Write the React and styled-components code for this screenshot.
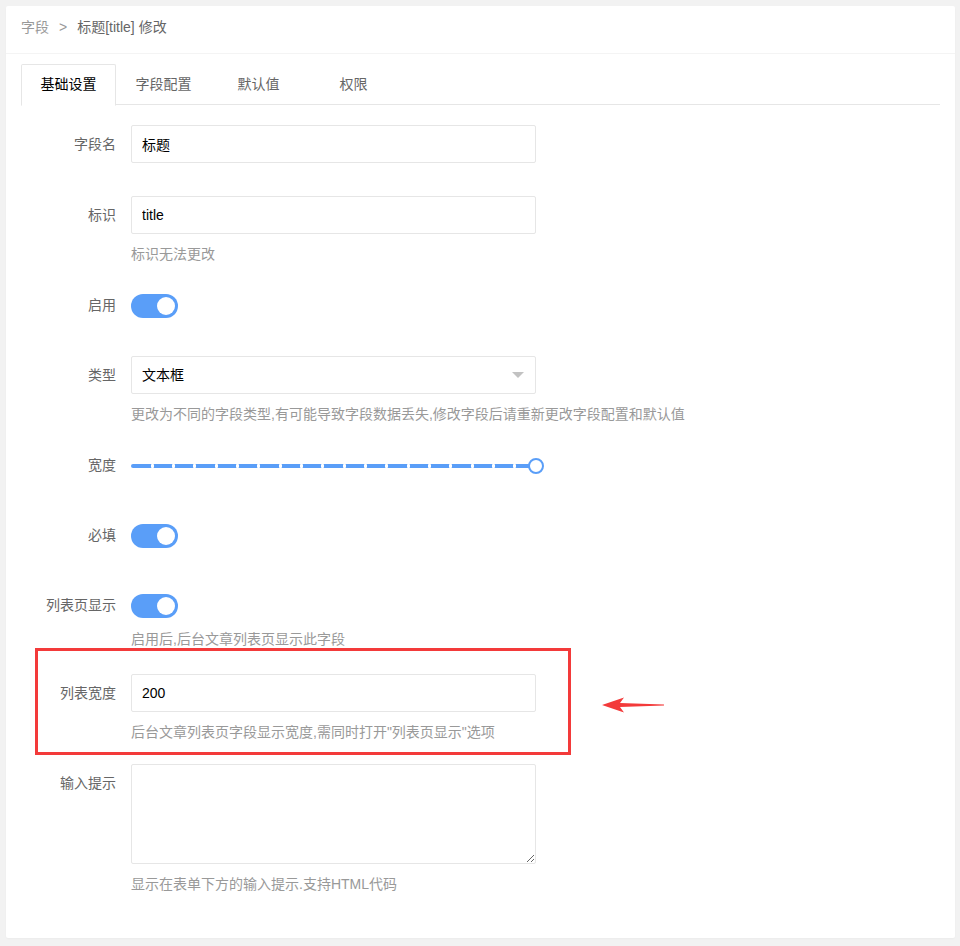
import React, { useState } from "react";
import styled, { createGlobalStyle, css } from "styled-components";

const GlobalStyle = createGlobalStyle`
  * { box-sizing: border-box; }
  html, body { margin: 0; padding: 0; }
  body {
    background: #f2f2f2;
    font-family: "Liberation Sans", "Noto Sans CJK SC", sans-serif;
    font-size: 14px;
    color: #333;
  }
`;

const BLUE = "#5a9ef8";
const RED = "#f33a3a";

// --- Layout ---
const Page = styled.div`
  padding: 6px 5px 8px 6px;
`;

const Card = styled.div`
  background: #fff;
  border-radius: 2px;
  box-shadow: 0 1px 2px rgba(0,0,0,0.03);
`;

const CardHeader = styled.div`
  padding: 11px 15px 16px;
  line-height: 20px;
  border-bottom: 1px solid #f4f4f4;
  font-size: 14px;
  span { color: #999; }
  em { font-style: normal; color: #999; margin: 0 10px; }
  b { font-weight: normal; color: #666; }
`;

const CardBody = styled.div`
  padding: 10px 15px 44px;
`;

// --- Tabs ---
const TabBar = styled.ul`
  display: flex;
  margin: 0;
  padding: 0;
  list-style: none;
  height: 41px;
  border-bottom: 1px solid #e6e6e6;
`;

const Tab = styled.li`
  min-width: 65px;
  padding: 0 15px;
  box-sizing: content-box;
  height: 40px;
  line-height: 40px;
  text-align: center;
  color: #666;
  cursor: pointer;
  ${({ $active }) => $active && css`
    color: #000;
    background: #fff;
    border: 1px solid #e6e6e6;
    border-bottom-color: #fff;
    border-radius: 2px 2px 0 0;
    height: 40px;
    line-height: 38px;
    padding: 0 14px;
    margin-bottom: -1px;
  `}
`;

const TabContent = styled.div`
  padding-top: 20px;
`;

// --- Form ---
const Item = styled.div`
  position: relative;
  display: flex;
  margin-bottom: ${({ $gap, $help }) => ($gap != null ? `${$gap}px` : $help ? "22px" : "32px")};
`;

const Label = styled.label`
  width: 110px;
  flex: none;
  padding: 9px 15px;
  line-height: 20px;
  text-align: right;
  color: #666;
`;

const Field = styled.div`
  width: 405px;
  min-height: 38px;
  display: flex;
  flex-direction: column;
  justify-content: flex-start;
`;

const Input = styled.input`
  width: 405px;
  height: 38px;
  border: 1px solid #e6e6e6;
  border-radius: 2px;
  padding: 0 10px;
  font: inherit;
  color: #000;
  outline: none;
`;

const TextArea = styled.textarea`
  display: block;
  width: 405px;
  height: 100px;
  border: 1px solid #e6e6e6;
  border-radius: 2px;
  padding: 6px 10px;
  font: inherit;
  color: #000;
  outline: none;
  resize: vertical;
`;

const Help = styled.div`
  margin-top: ${({ $tight }) => ($tight ? "5px" : "10px")};
  line-height: 20px;
  color: #999;
  white-space: nowrap;
`;

const SelectBox = styled.div`
  position: relative;
  height: 38px;
  border: 1px solid #e6e6e6;
  border-radius: 2px;
  padding: 0 10px;
  line-height: 36px;
  color: #000;
  &::after {
    content: "";
    position: absolute;
    right: 11px;
    top: 15px;
    border-style: solid;
    border-width: 6px 6px 0;
    border-color: #c2c2c2 transparent transparent;
  }
`;

const SwitchRow = styled.div`
  height: 38px;
  padding-top: 8px;
`;

const Switch = styled.button`
  position: relative;
  display: block;
  width: 47px;
  height: 24px;
  border: none;
  border-radius: 12px;
  padding: 0;
  background: ${({ $on }) => ($on ? BLUE : "#d2d2d2")};
  cursor: pointer;
  &::after {
    content: "";
    position: absolute;
    top: 3px;
    left: ${({ $on }) => ($on ? "26px" : "3px")};
    width: 18px;
    height: 18px;
    border-radius: 50%;
    background: #fff;
    transition: left 0.2s;
  }
`;

const SliderWrap = styled.div`
  height: 38px;
  padding-top: 18px;
`;

const Track = styled.div`
  position: relative;
  width: 100%;
  height: 4px;
  background: ${BLUE};
  border-radius: 2px;
`;

const Step = styled.span`
  position: absolute;
  top: 0;
  width: 3px;
  height: 4px;
  border-radius: 1px;
  background: #fff;
`;

const Handle = styled.span`
  position: absolute;
  right: -8px;
  top: 50%;
  width: 16px;
  height: 16px;
  margin-top: -8px;
  border: 2px solid ${BLUE};
  border-radius: 50%;
  background: #fff;
`;

// --- Annotation overlay ---
const Highlight = styled.div`
  position: absolute;
  left: 14px;
  top: -26px;
  width: 536px;
  height: 107px;
  border: 3px solid ${RED};
  pointer-events: none;
`;

const Arrow = styled.svg`
  position: absolute;
  left: 580px;
  top: 22px;
`;

const Slider = ({ steps = 19 }) => (
  <SliderWrap>
    <Track>
      {Array.from({ length: steps - 1 }, (_, i) => (
        <Step key={i} style={{ left: `calc(${((i + 1) / steps) * 100}% - 1.5px)` }} />
      ))}
      <Handle />
    </Track>
  </SliderWrap>
);

const tabs = ["基础设置", "字段配置", "默认值", "权限"];

export default function App() {
  const [active, setActive] = useState(0);
  const [sw, setSw] = useState({ enable: true, required: true, list: true });
  const toggle = (k) => setSw({ ...sw, [k]: !sw[k] });

  return (
    <Page>
      <GlobalStyle />
      <Card>
        <CardHeader>
          <span>字段</span><em>&gt;</em><b>标题[title] 修改</b>
        </CardHeader>
        <CardBody>
          <TabBar>
            {tabs.map((t, i) => (
              <Tab key={t} $active={i === active} onClick={() => setActive(i)}>{t}</Tab>
            ))}
          </TabBar>
          <TabContent>
            <Item $gap={33}>
              <Label>字段名</Label>
              <Field><Input defaultValue="标题" /></Field>
            </Item>

            <Item $help>
              <Label>标识</Label>
              <Field>
                <Input defaultValue="title" />
                <Help>标识无法更改</Help>
              </Field>
            </Item>

            <Item>
              <Label>启用</Label>
              <Field><SwitchRow><Switch $on={sw.enable} onClick={() => toggle("enable")} /></SwitchRow></Field>
            </Item>

            <Item $help>
              <Label>类型</Label>
              <Field>
                <SelectBox>文本框</SelectBox>
                <Help>更改为不同的字段类型,有可能导致字段数据丢失,修改字段后请重新更改字段配置和默认值</Help>
              </Field>
            </Item>

            <Item>
              <Label>宽度</Label>
              <Field><Slider /></Field>
            </Item>

            <Item>
              <Label>必填</Label>
              <Field><SwitchRow><Switch $on={sw.required} onClick={() => toggle("required")} /></SwitchRow></Field>
            </Item>

            <Item $gap={25}>
              <Label>列表页显示</Label>
              <Field>
                <SwitchRow><Switch $on={sw.list} onClick={() => toggle("list")} /></SwitchRow>
                <Help $tight>启用后,后台文章列表页显示此字段</Help>
              </Field>
            </Item>

            <Item $help>
              <Highlight />
              <Arrow width="64" height="18" viewBox="0 0 64 18">
                <polygon points="1,9 23,1.5 19,7 63,8.4 63,9.6 19,11 23,16.5" fill={RED} />
              </Arrow>
              <Label>列表宽度</Label>
              <Field>
                <Input defaultValue="200" />
                <Help>后台文章列表页字段显示宽度,需同时打开"列表页显示"选项</Help>
              </Field>
            </Item>

            <Item $gap={0}>
              <Label>输入提示</Label>
              <Field>
                <TextArea />
                <Help>显示在表单下方的输入提示.支持HTML代码</Help>
              </Field>
            </Item>
          </TabContent>
        </CardBody>
      </Card>
    </Page>
  );
}
